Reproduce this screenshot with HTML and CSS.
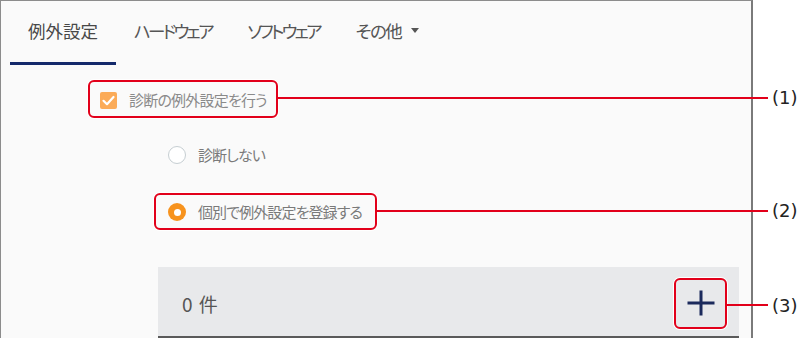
FILE: index.html
```html
<!DOCTYPE html>
<html lang="ja">
<head>
<meta charset="utf-8">
<title>例外設定</title>
<link rel="stylesheet" href="styles.css">
</head>
<body>
<div class="page">
  <div class="panel">
    <nav class="tabs">
      <div class="tab active">例外設定</div>
      <div class="tab kana">ハードウェア</div>
      <div class="tab kana">ソフトウェア</div>
      <div class="tab mixed">その他<span class="caret"></span></div>
    </nav>
    <div class="content">
      <div class="check-row">
        <span class="checkbox">
          <svg width="17" height="17" viewBox="0 0 17 17"><polyline points="3.5,8.8 7,12.2 13.5,5" fill="none" stroke="#fff" stroke-width="2.2" stroke-linecap="round" stroke-linejoin="round"/></svg>
        </span>
        <span class="check-label">診断の例外設定を行う</span>
      </div>
      <div class="radios">
        <div class="radio-row"><span class="radio"></span><span class="radio-label">診断しない</span></div>
        <div class="radio-row"><span class="radio on"></span><span class="radio-label">個別で例外設定を登録する</span></div>
      </div>
      <div class="list-head">
        <span class="count">0 件</span>
        <button class="add" type="button" aria-label="追加">
          <svg width="28" height="28" viewBox="0 0 28 28"><path d="M14 1.5V26.5M0.5 14H27.5" stroke="#1b2a5c" stroke-width="3" fill="none"/></svg>
        </button>
      </div>
    </div>
  </div>

  <div class="note-box nb1"></div>
  <div class="note-line nl1"></div>
  <div class="note-label lb1">(1)</div>

  <div class="note-box nb2"></div>
  <div class="note-line nl2"></div>
  <div class="note-label lb2">(2)</div>

  <div class="note-box nb3"></div>
  <div class="note-line nl3"></div>
  <div class="note-label lb3">(3)</div>
</div>
</body>
</html>
```

FILE: styles.css
```css
html, body {
  margin: 0;
  padding: 0;
  background: #fff;
  height: 338px;
  overflow: hidden;
}

.page {
  position: relative;
  width: 805px;
  height: 338px;
  overflow: hidden;
  font-family: "Noto Sans CJK JP", sans-serif;
  font-feature-settings: "palt";
}

.panel {
  width: 753px;
  height: 400px;
  box-sizing: border-box;
  background: #fafafa;
  border-top: 1px solid #8c8c8c;
  border-left: 1px solid #8c8c8c;
  border-right: 2px solid #7a7a7a;
}

.tabs {
  display: flex;
  height: 64px;
  padding-left: 9px;
}

.tab {
  display: flex;
  align-items: center;
  padding: 0 18px 2px;
  font-size: 17.5px;
  color: #555;
  border-bottom: 3px solid transparent;
}

.tab.kana {
  letter-spacing: -2.8px;
}

.tab.mixed {
  letter-spacing: -1.5px;
}

.tab.active {
  color: #484848;
  border-bottom-color: #14296b;
}

.caret {
  display: inline-block;
  margin-left: 10px;
  width: 0;
  height: 0;
  border-left: 4.5px solid transparent;
  border-right: 4.5px solid transparent;
  border-top: 5px solid #555;
}

.content {
  display: flex;
  flex-direction: column;
  align-items: flex-start;
}

.check-row {
  display: flex;
  align-items: center;
  gap: 12px;
  height: 20px;
  margin: 25px 0 0 99px;
}

.checkbox {
  width: 17px;
  height: 17px;
  border-radius: 2px;
  background: #fbab58;
  display: flex;
}

.check-label {
  font-size: 15px;
  color: #8a8a8a;
  line-height: 20px;
  letter-spacing: -0.8px;
}

.radios {
  display: flex;
  flex-direction: column;
  gap: 37px;
  margin: 35px 0 0 167px;
}

.radio-row {
  display: flex;
  align-items: center;
  gap: 12px;
  height: 20px;
}

.radio {
  width: 18px;
  height: 18px;
  box-sizing: border-box;
  border-radius: 50%;
  border: 1.5px solid #c6ced2;
  background: #fff;
  display: flex;
  align-items: center;
  justify-content: center;
}

.radio.on {
  border: none;
  background: #f7931e;
}

.radio.on::after {
  content: "";
  width: 7px;
  height: 7px;
  border-radius: 50%;
  background: #fff;
}

.radio-label {
  font-size: 15px;
  color: #7a7a7a;
  line-height: 20px;
  letter-spacing: -0.9px;
}

.list-head {
  display: flex;
  align-items: center;
  justify-content: space-between;
  box-sizing: border-box;
  width: 581px;
  height: 71px;
  margin: 45px 0 0 157px;
  padding: 3px 14px 0 24px;
  background: #e8e9eb;
  border-bottom: 2px solid #5a5a5a;
}

.count {
  font-size: 19px;
  color: #555;
  word-spacing: 2px;
}

.add {
  width: 48px;
  height: 48px;
  padding: 0;
  border: none;
  background: transparent;
  display: flex;
  align-items: center;
  justify-content: center;
}

/* annotation overlay */
.note-box {
  position: absolute;
  box-sizing: border-box;
  border: 2.5px solid #e2001a;
  border-radius: 6px;
  box-shadow: 0 0 0 1px #fff;
}

.note-line {
  position: absolute;
  height: 2px;
  background: #e2001a;
}

.note-label {
  position: absolute;
  left: 772px;
  font-family: "DejaVu Sans", sans-serif;
  font-size: 18px;
  line-height: 22px;
  color: #222;
}

.nb1 { left: 88px; top: 80px; width: 190px; height: 38px; }
.nl1 { left: 278px; top: 97px; width: 490px; }
.lb1 { top: 87px; }

.nb2 { left: 154px; top: 193px; width: 223px; height: 37px; }
.nl2 { left: 377px; top: 210px; width: 391px; }
.lb2 { top: 200px; }

.nb3 { left: 674px; top: 278px; width: 53px; height: 51px; }
.nl3 { left: 727px; top: 304px; width: 41px; }
.lb3 { top: 295px; }
```
